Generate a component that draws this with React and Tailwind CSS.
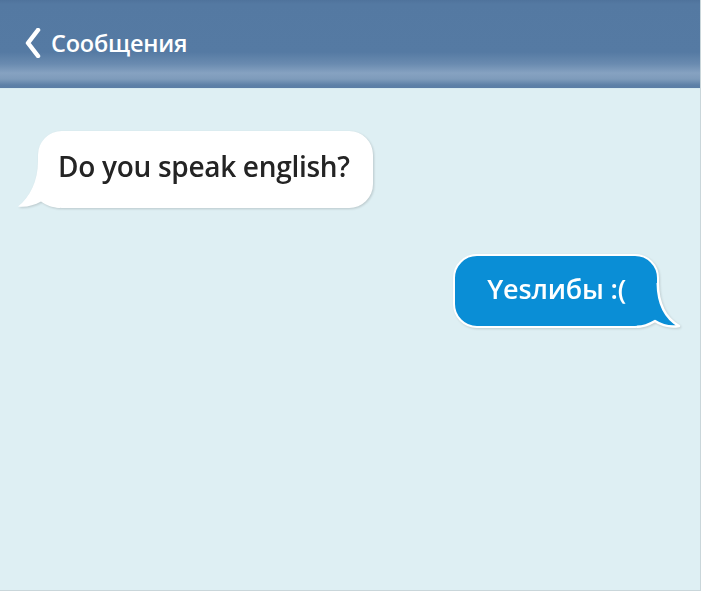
import React from 'react';

const FONT = { fontFamily: '"Open Sans", "Noto Sans", sans-serif' };

function Header() {
  return (
    <div className="relative h-[89px] border-b border-[#d6eaf0] bg-[linear-gradient(to_bottom,#4f739c_0px,#5479a2_4px,#557aa3_52px,#6a8bb0_64px,#86a2c1_73px,#7e9bbb_79px,#5d80a7_85px,#587ca4_89px)]">
      <div className="flex h-[86px] items-center gap-[10px] pl-[25px] pt-[1px]">
        <svg width="16" height="30" viewBox="0 0 16 30" className="-mt-[2px]">
          <path d="M13 2 L3 15 L13 28" fill="none" stroke="#fff" strokeWidth="4.5" strokeLinecap="round" strokeLinejoin="round" />
        </svg>
        <span className="text-[23.5px] font-semibold tracking-[-0.2px] text-white" style={FONT}>
          Сообщения
        </span>
      </div>
    </div>
  );
}

function InBubble({ children }) {
  return (
    <div className="relative ml-[38px] w-fit drop-shadow-[1px_1.5px_1px_rgba(0,0,0,0.16)]">
      <div className="relative flex h-[77px] items-center rounded-[24px] bg-white pl-[20px] pr-[23px] pb-[7px]">
        <span className="text-[28px] font-semibold tracking-[-0.3px] text-[#242424]" style={FONT}>
          {children}
        </span>
      </div>
      <svg width="44" height="50" viewBox="0 0 44 50" className="absolute bottom-[-1px] left-[-22px]">
        <path d="M22 2 C22 22 14 38 2 47.5 C10 48.5 18 46.5 25 42.5 C30 46 36 48.5 44 49 L44 2 Z" fill="#fff" />
      </svg>
    </div>
  );
}

function OutBubble({ children }) {
  return (
    <div className="relative mr-[41px] ml-auto w-fit drop-shadow-[1px_1.5px_1px_rgba(0,0,0,0.14)]">
      <div className="relative flex h-[74px] items-center rounded-[24px] border-[2.5px] border-white bg-[#0a8ed6] pl-[32px] pr-[31px] pb-[4px]">
        <span className="text-[27px] font-semibold tracking-[-0.2px] text-white" style={FONT}>
          {children}
        </span>
      </div>
      <svg width="46" height="50" viewBox="0 0 46 50" className="absolute bottom-[-1px] right-[-24px]">
        <path d="M20.75 4 C21 24 28 39 42 47 C33 48.5 25 46.5 18 42 C13 45 8 47.75 0 47.75 L0 4 Z" fill="#0a8ed6" />
        <path d="M20.75 4 C21 24 28 39 42 47 C33 48.5 25 46.5 18 42 C13 45 8 47.75 0 47.75" fill="none" stroke="#fff" strokeWidth="2.5" strokeLinejoin="round" />
      </svg>
    </div>
  );
}

export default function App() {
  return (
    <div className="h-[591px] w-[701px] overflow-hidden border-r border-b border-[#c9d6da] bg-[#deeff3]">
      <Header />
      <div className="flex flex-col pt-[42px]">
        <InBubble>Do you speak english?</InBubble>
        <div className="mt-[46px]">
          <OutBubble>Yesлибы :(</OutBubble>
        </div>
      </div>
    </div>
  );
}
